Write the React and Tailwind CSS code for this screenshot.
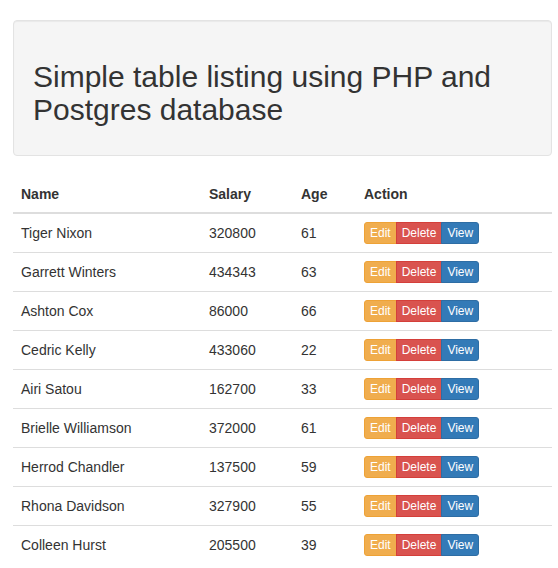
import React from "react";

const rows = [
  ["Tiger Nixon", "320800", "61"],
  ["Garrett Winters", "434343", "63"],
  ["Ashton Cox", "86000", "66"],
  ["Cedric Kelly", "433060", "22"],
  ["Airi Satou", "162700", "33"],
  ["Brielle Williamson", "372000", "61"],
  ["Herrod Chandler", "137500", "59"],
  ["Rhona Davidson", "327900", "55"],
  ["Colleen Hurst", "205500", "39"],
];

const ActionGroup = () => (
  <div className="inline-flex align-top">
    <button className="px-[5px] py-px text-xs leading-[18px] text-white bg-[#f0ad4e] border border-[#eea236] rounded-l-[3px]">
      Edit
    </button>
    <button className="-ml-px px-[5px] py-px text-xs leading-[18px] text-white bg-[#d9534f] border border-[#d43f3a]">
      Delete
    </button>
    <button className="-ml-px px-[5px] py-px text-xs leading-[18px] text-white bg-[#337ab7] border border-[#2e6da4] rounded-r-[3px]">
      View
    </button>
  </div>
);

export default function App() {
  return (
    <div
      className="min-h-[568px] bg-white text-[#333] text-sm leading-5 pt-5"
      style={{ fontFamily: '"Liberation Sans", Arial, sans-serif' }}
    >
      <div className="ml-[13px] w-[539px]">
        {/* Well */}
        <div className="bg-[#f5f5f5] border border-[#e3e3e3] rounded p-[19px] mb-5 shadow-[inset_0_1px_1px_rgba(0,0,0,0.05)]">
          <h2 className="mt-5 mb-2.5 text-[30px] leading-[33px] font-normal">
            Simple table listing using PHP and Postgres database
          </h2>
        </div>

        {/* Table */}
        <table className="w-full border-collapse">
          <thead>
            <tr className="text-left">
              <th className="w-[188px] p-2 font-bold border-b-2 border-[#ddd]">Name</th>
              <th className="w-[92px] p-2 font-bold border-b-2 border-[#ddd]">Salary</th>
              <th className="w-[63px] p-2 font-bold border-b-2 border-[#ddd]">Age</th>
              <th className="p-2 font-bold border-b-2 border-[#ddd]">Action</th>
            </tr>
          </thead>
          <tbody>
            {rows.map(([name, salary, age], i) => (
              <tr key={name} className={i > 0 ? "border-t border-[#ddd]" : ""}>
                <td className="px-2 py-2 leading-[21px]">{name}</td>
                <td className="px-2 py-2 leading-[21px]">{salary}</td>
                <td className="px-2 py-2 leading-[21px]">{age}</td>
                <td className="px-2 py-2 leading-[21px]">
                  <ActionGroup />
                </td>
              </tr>
            ))}
          </tbody>
        </table>
      </div>
    </div>
  );
}
